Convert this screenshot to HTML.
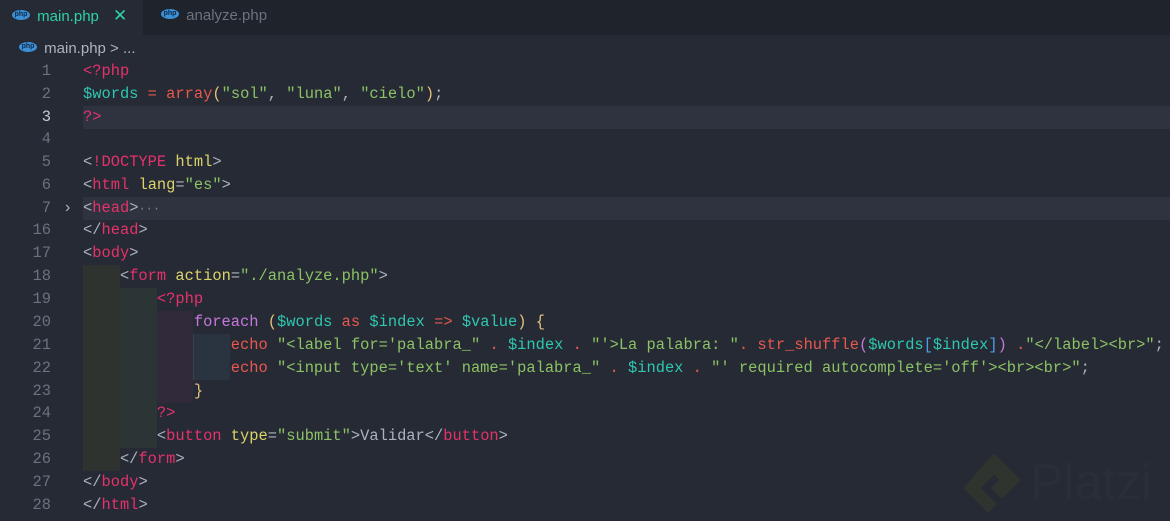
<!DOCTYPE html>
<html><head><meta charset="utf-8"><style>
body{margin:0;width:1170px;height:521px;background:#262a35;overflow:hidden;position:relative;font-family:"Liberation Mono",monospace}
.tabbar{position:absolute;left:0;top:0;width:1170px;height:35px;background:#1f232c}
.tab{position:absolute;top:0;height:35px;font-family:"Liberation Sans",sans-serif;font-size:15px;line-height:32px}
.badge{display:inline-block;width:18px;height:10px;border-radius:50%;background:#3d8fd6;color:#0d2a4a;font-size:7px;line-height:10px;text-align:center;font-weight:bold;vertical-align:middle;position:relative;top:-2px;margin-right:3px}
.row{position:absolute;left:0;height:23px;line-height:23px;font-size:15.4px;white-space:pre;width:1170px}
.ln{position:absolute;right:1119px;color:#6b717d;text-align:right}
.code{position:absolute;left:83px;color:#abb2bf}
.t{color:#e5326b}.a{color:#dcd36a}.s{color:#8cc265}.v{color:#2ec7b0}.f{color:#e8584f}.k{color:#c678dd}.y{color:#e5c07b}.g{color:#abb2bf}.o{color:#e8584f}.b{color:#4f9de8}.p{color:#c678dd}
.hl{position:absolute;left:83px;width:1087px;height:23px;background:#2e333f}
.ig{position:absolute}
</style></head><body>
<div class="tabbar"></div>
<div class="tab" style="left:0;width:143px;background:#262a35;padding-left:12px;box-sizing:border-box;color:#2fd1a5"><span class="badge">php</span> main.php <span style="margin-left:10px;color:#2fd1a5;font-size:17px">✕</span></div>
<div class="tab" style="left:161px;color:#6d727c"><span class="badge">php</span> analyze.php</div>
<div class="tab" style="left:19px;top:33px;color:#aeb3bd"><span class="badge">php</span> main.php <span style="color:#aeb3bd">&gt;</span> ...</div>

<div class="hl" style="top:106px"></div>
<div class="hl" style="top:197px"></div>
<div class="ig" style="left:83px;top:265px;width:37px;height:206px;background:#2f3330"></div>
<div class="ig" style="left:120px;top:288px;width:37px;height:160px;background:#2b3535"></div>
<div class="ig" style="left:157px;top:311px;width:36px;height:92px;background:#302a3a"></div>
<div class="ig" style="left:193px;top:334px;width:37px;height:46px;background:#2a3440;border-left:1px solid #3a4250;box-sizing:border-box"></div>

<div class="row" style="top:60px"><span class="ln">1</span><span class="code"><span class="t">&lt;?php</span></span></div>
<div class="row" style="top:83px"><span class="ln">2</span><span class="code"><span class="v">$words</span> <span class="o">=</span> <span class="f">array</span><span class="y">(</span><span class="s">"sol"</span>, <span class="s">"luna"</span>, <span class="s">"cielo"</span><span class="y">)</span>;</span></div>
<div class="row" style="top:106px"><span class="ln" style="color:#c5cad3">3</span><span class="code"><span class="t">?&gt;</span></span></div>
<div class="row" style="top:128px"><span class="ln">4</span></div>
<div class="row" style="top:151px"><span class="ln">5</span><span class="code">&lt;<span class="t">!DOCTYPE</span> <span class="a">html</span>&gt;</span></div>
<div class="row" style="top:174px"><span class="ln">6</span><span class="code">&lt;<span class="t">html</span> <span class="a">lang</span>=<span class="s">"es"</span>&gt;</span></div>
<div class="row" style="top:197px"><span class="ln">7</span><span style="position:absolute;left:63px;color:#aeb3bd">›</span><span class="code">&lt;<span class="t">head</span>&gt;<span style="color:#7a808c;font-size:12px">···</span></span></div>
<div class="row" style="top:219px"><span class="ln">16</span><span class="code">&lt;/<span class="t">head</span>&gt;</span></div>
<div class="row" style="top:242px"><span class="ln">17</span><span class="code">&lt;<span class="t">body</span>&gt;</span></div>
<div class="row" style="top:265px"><span class="ln">18</span><span class="code">    &lt;<span class="t">form</span> <span class="a">action</span>=<span class="s">"./analyze.php"</span>&gt;</span></div>
<div class="row" style="top:288px"><span class="ln">19</span><span class="code">        <span class="t">&lt;?php</span></span></div>
<div class="row" style="top:311px"><span class="ln">20</span><span class="code">            <span class="k">foreach</span> <span class="y">(</span><span class="v">$words</span> <span class="o">as</span> <span class="v">$index</span> <span class="o">=&gt;</span> <span class="v">$value</span><span class="y">)</span> <span class="y">{</span></span></div>
<div class="row" style="top:334px"><span class="ln">21</span><span class="code">                <span class="o">echo</span> <span class="s">"&lt;label for='palabra_"</span> <span class="o">.</span> <span class="v">$index</span> <span class="o">.</span> <span class="s">"'&gt;La palabra: "</span><span class="o">.</span> <span class="f">str_shuffle</span><span class="p">(</span><span class="v">$words</span><span class="b">[</span><span class="v">$index</span><span class="b">]</span><span class="p">)</span> <span class="o">.</span><span class="s">"&lt;/label&gt;&lt;br&gt;"</span>;</span></div>
<div class="row" style="top:357px"><span class="ln">22</span><span class="code">                <span class="o">echo</span> <span class="s">"&lt;input type='text' name='palabra_"</span> <span class="o">.</span> <span class="v">$index</span> <span class="o">.</span> <span class="s">"' required autocomplete='off'&gt;&lt;br&gt;&lt;br&gt;"</span>;</span></div>
<div class="row" style="top:380px"><span class="ln">23</span><span class="code">            <span class="y">}</span></span></div>
<div class="row" style="top:402px"><span class="ln">24</span><span class="code">        <span class="t">?&gt;</span></span></div>
<div class="row" style="top:425px"><span class="ln">25</span><span class="code">        &lt;<span class="t">button</span> <span class="a">type</span>=<span class="s">"submit"</span>&gt;Validar&lt;/<span class="t">button</span>&gt;</span></div>
<div class="row" style="top:448px"><span class="ln">26</span><span class="code">    &lt;/<span class="t">form</span>&gt;</span></div>
<div class="row" style="top:471px"><span class="ln">27</span><span class="code">&lt;/<span class="t">body</span>&gt;</span></div>
<div class="row" style="top:494px"><span class="ln">28</span><span class="code">&lt;/<span class="t">html</span>&gt;</span></div>

<svg style="position:absolute;left:960px;top:448px" width="70" height="70" viewBox="0 0 70 70"><path d="M34 8 L58 32 L42 48 L34 40 L42 32 L34 24 L18 40 L34 56 L28 62 L6 40 Z" fill="#2f342f" stroke="#2f342f" stroke-width="4" stroke-linejoin="round"/></svg>
<div style="position:absolute;left:1030px;top:452px;font-family:'Liberation Sans',sans-serif;font-size:50px;color:#2a2e39;line-height:60px">Platzi</div>
</body></html>
